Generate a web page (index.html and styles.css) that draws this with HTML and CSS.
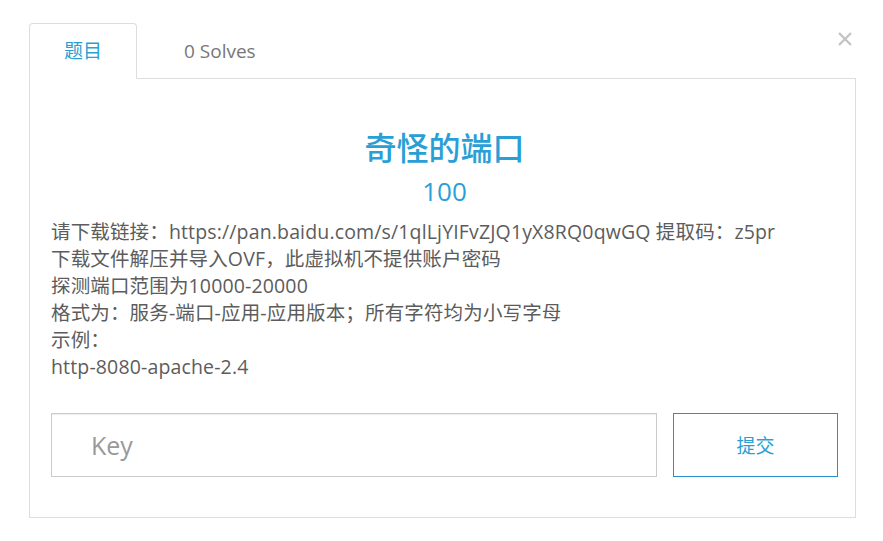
FILE: index.html
```html
<!DOCTYPE html>
<html lang="zh-CN">
<head>
    <meta charset="UTF-8">
    <meta name="viewport" content="width=device-width, initial-scale=1.0">
    <title>奇怪的端口</title>
    <link rel="stylesheet" href="styles.css">
</head>
<body>
    <div class="modal">
        <button class="close" aria-label="Close">
            <svg width="14" height="14" viewBox="0 0 14 14">
                <path d="M1 1 L13 13 M13 1 L1 13" stroke="#c4c4c4" stroke-width="2.4" fill="none"/>
            </svg>
        </button>
        <ul class="tabs">
            <li class="tab active">题目</li>
            <li class="tab">0 Solves</li>
        </ul>
        <div class="panel">
            <h3 class="chal-name">奇怪的端口</h3>
            <h4 class="chal-value">100</h4>
            <div class="chal-desc">
                请下载链接：https://pan.baidu.com/s/1qlLjYIFvZJQ1yX8RQ0qwGQ 提取码：z5pr<br>
                下载文件解压并导入OVF，此虚拟机不提供账户密码<br>
                探测端口范围为10000-20000<br>
                格式为：服务-端口-应用-应用版本；所有字符均为小写字母<br>
                示例：<br>
                http-8080-apache-2.4
            </div>
            <form class="submit-row" onsubmit="return false">
                <input class="key-input" type="text" placeholder="Key">
                <button class="submit-btn" type="submit">提交</button>
            </form>
        </div>
    </div>
</body>
</html>
```

FILE: styles.css
```css
body {
    margin: 0;
    background-color: #fff;
    font-family: 'Open Sans', 'Noto Sans CJK SC', sans-serif;
    color: #5c5c5c;
}
.modal {
    position: relative;
    padding: 23px 27px 0 29px;
}
.close {
    position: absolute;
    top: 32px;
    right: 31px;
    padding: 0;
    border: none;
    background: none;
    line-height: 0;
    cursor: pointer;
}
.tabs {
    display: flex;
    margin: 0;
    padding: 0;
    list-style: none;
    border-bottom: 1px solid #ddd;
}
.tab {
    box-sizing: border-box;
    height: 56px;
    margin-bottom: -1px;
    margin-right: 12px;
    padding: 0 34px;
    border: 1px solid transparent;
    border-radius: 4px 4px 0 0;
    font-size: 19px;
    line-height: 54px;
    color: #777;
}
.tab.active {
    border-color: #ddd;
    border-bottom-color: #fff;
    background-color: #fff;
    color: #2a9fd6;
}
.panel {
    padding: 49px 17px 40px 21px;
    border: 1px solid #ddd;
    border-top: none;
}
.chal-name {
    margin: 0;
    font-size: 32px;
    line-height: 40px;
    font-weight: 500;
    text-align: center;
    color: #2a9fd6;
}
.chal-value {
    margin: 5px 0 0;
    font-size: 26px;
    line-height: 36px;
    font-weight: 400;
    text-align: center;
    color: #2a9fd6;
}
.chal-desc {
    margin-top: 9px;
    font-size: 19.5px;
    line-height: 27px;
    letter-spacing: 0.15px;
}
.submit-row {
    display: flex;
    gap: 16px;
    margin-top: 33px;
}
.key-input {
    flex: 1;
    box-sizing: border-box;
    height: 64px;
    padding: 0 39px;
    border: 1px solid #ccc;
    box-shadow: inset 0 1px 1px rgba(0, 0, 0, 0.075);
    font-family: inherit;
    font-size: 25px;
    color: #555;
    outline: none;
}
.key-input::placeholder {
    color: #999;
}
.submit-btn {
    box-sizing: border-box;
    width: 165px;
    height: 64px;
    border: 1px solid #2890cc;
    background-color: #fff;
    font-family: inherit;
    font-size: 19px;
    color: #2a9fd6;
    cursor: pointer;
}
```
